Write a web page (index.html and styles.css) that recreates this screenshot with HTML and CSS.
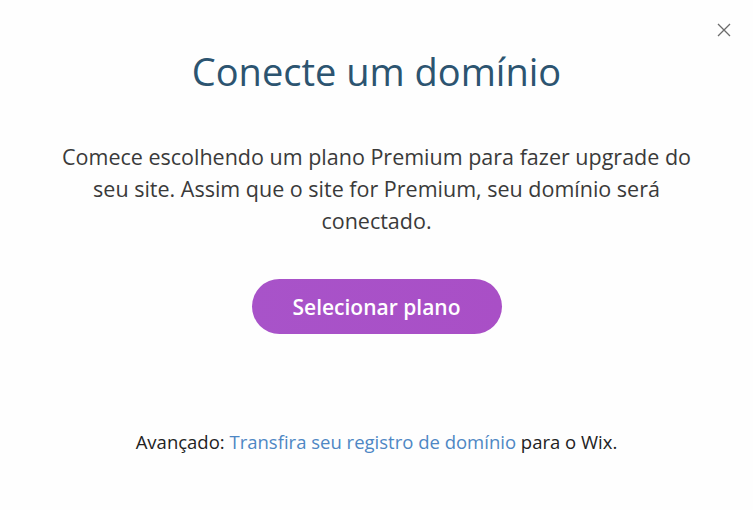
FILE: index.html
```html
<!DOCTYPE html>
<html lang="pt">
<head>
    <meta charset="UTF-8">
    <meta name="viewport" content="width=device-width, initial-scale=1.0">
    <title>Conecte um domínio</title>
    <link rel="stylesheet" href="styles.css">
</head>
<body>
    <div class="modal">
        <button class="close" aria-label="Fechar">
            <svg width="14" height="14" viewBox="0 0 14 14">
                <path d="M1 1 L13 13 M13 1 L1 13" stroke="#6b6b6b" stroke-width="1.3" fill="none"/>
            </svg>
        </button>

        <h1 class="title">Conecte um domínio</h1>

        <p class="intro">Comece escolhendo um plano Premium para fazer upgrade do seu site. Assim que o site for Premium, seu domínio será conectado.</p>

        <button class="select-plan">Selecionar plano</button>

        <p class="advanced">Avançado: <a href="#">Transfira seu registro de domínio</a> para o Wix.</p>
    </div>
</body>
</html>
```

FILE: styles.css
```css
body {
    margin: 0;
    padding: 0;
    font-family: 'Open Sans', 'Noto Sans', sans-serif;
    background: #ffffff;
}
.modal {
    position: relative;
    width: 753px;
    height: 510px;
    display: flex;
    flex-direction: column;
    align-items: center;
    text-align: center;
    padding-top: 49px;
    box-sizing: border-box;
    background: #fefefe;
}
.close {
    position: absolute;
    top: 23px;
    right: 22px;
    background: none;
    border: none;
    padding: 0;
    cursor: pointer;
    line-height: 0;
}
.title {
    margin: 0;
    font-size: 38px;
    line-height: 44px;
    font-weight: 400;
    color: #2c5470;
}
.intro {
    margin: 48px 0 0;
    width: 640px;
    font-size: 21.5px;
    line-height: 32px;
    color: #3a3a3a;
}
.select-plan {
    margin-top: 42px;
    width: 250px;
    height: 55px;
    border: none;
    border-radius: 28px;
    background: linear-gradient(90deg, #a853c9, #a94fc6);
    color: #ffffff;
    font-family: inherit;
    font-size: 21px;
    font-weight: 600;
    cursor: pointer;
}
.advanced {
    margin: 97px 0 0;
    font-size: 18.5px;
    line-height: 22px;
    color: #222222;
}
.advanced a {
    color: #4e87c4;
    text-decoration: none;
}
```
